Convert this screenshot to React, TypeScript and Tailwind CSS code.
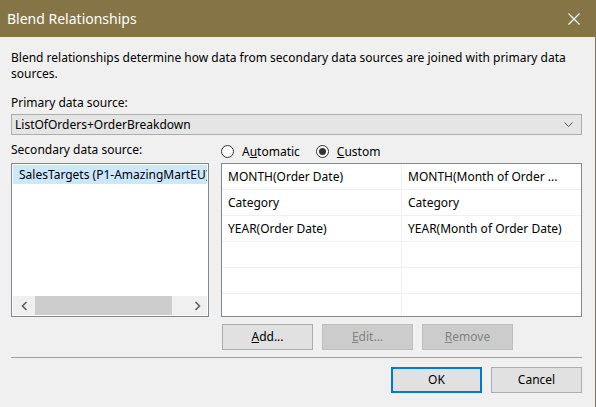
import React from "react";

const font = { fontFamily: '"Noto Sans", "Open Sans", sans-serif' };

function Radio({ checked }: { checked?: boolean }) {
  return (
    <span className="w-[13px] h-[13px] rounded-full border border-[#333333] bg-white flex items-center justify-center shrink-0">
      {checked && <span className="w-[7px] h-[7px] rounded-full bg-[#333333]" />}
    </span>
  );
}

const rows: [string, string][] = [
  ["MONTH(Order Date)", "MONTH(Month of Order ..."],
  ["Category", "Category"],
  ["YEAR(Order Date)", "YEAR(Month of Order Date)"],
  ["", ""],
  ["", ""],
  ["", ""],
];

export default function App() {
  return (
    <div
      className="w-[596px] h-[407px] bg-[#f0f0f0] flex flex-col border-r border-[#857546] text-[12px] leading-[16px] text-black overflow-hidden"
      style={font}
    >
      {/* Title bar */}
      <div className="h-[37px] bg-[#857546] flex items-center justify-between pl-[7px] pr-[15px] shrink-0">
        <span className="text-[14px] leading-[20px] text-white">Blend Relationships</span>
        <svg width="12" height="12" viewBox="0 0 12 12">
          <path d="M0.5 0.5 L11.5 11.5 M11.5 0.5 L0.5 11.5" stroke="white" strokeWidth="1.1" fill="none" />
        </svg>
      </div>

      <div className="flex flex-col pl-[11px] pr-[13px]">
        <p className="mt-[13px] w-[571px]">
          Blend relationships determine how data from secondary data sources are joined with primary data sources.
        </p>

        <div className="mt-[13px] h-[16px]">Primary data source:</div>
        <div className="mt-[3px] h-[21px] border border-[#adadad] bg-[#e5e5e5] flex items-center justify-between pl-[3px] pr-[8px]">
          <span>ListOfOrders+OrderBreakdown</span>
          <svg width="9" height="5" viewBox="0 0 9 5">
            <path d="M0.5 0.5 L4.5 4.5 L8.5 0.5" stroke="#555" strokeWidth="1" fill="none" />
          </svg>
        </div>

        <div className="flex gap-[12px]">
          {/* Left column */}
          <div className="w-[198px] flex flex-col">
            <div className="mt-[7px] h-[16px] whitespace-nowrap">Secondary data source:</div>
            <div className="mt-[5px] h-[154px] border border-[#828790] bg-white flex flex-col justify-between p-[1px]">
              <div className="h-[19px] bg-[#cce8ff] pl-[6px] flex items-center whitespace-nowrap overflow-hidden">
                SalesTargets (P1-AmazingMartEU)
              </div>
              <div className="h-[19px] bg-[#f0f0f0] flex items-center">
                <div className="w-[22px] flex justify-center">
                  <svg width="7" height="10" viewBox="0 0 7 10">
                    <path d="M5.5 1 L1.5 5 L5.5 9" stroke="#606060" strokeWidth="1.6" fill="none" />
                  </svg>
                </div>
                <div className="w-[137px] h-[19px] bg-[#cdcdcd]" />
                <div className="flex-1" />
                <div className="w-[20px] flex justify-center">
                  <svg width="7" height="10" viewBox="0 0 7 10">
                    <path d="M1.5 1 L5.5 5 L1.5 9" stroke="#606060" strokeWidth="1.6" fill="none" />
                  </svg>
                </div>
              </div>
            </div>
          </div>

          {/* Right column */}
          <div className="w-[361px] flex flex-col">
            <div className="pt-[5px] h-[28px] flex items-center">
              <Radio />
              <span className="ml-[8px]">
                A<u>u</u>tomatic
              </span>
              <span className="ml-[16px]">
                <Radio checked />
              </span>
              <span className="ml-[8px]">
                <u>C</u>ustom
              </span>
            </div>
            <div className="h-[154px] border border-[#828790] bg-white overflow-hidden">
              {rows.map((r, i) => (
                <div key={i} className="h-[26px] border-b border-[#f0f0f0] flex">
                  <div className="w-[180px] border-r border-[#f0f0f0] pl-[6px] flex items-center whitespace-nowrap overflow-hidden">
                    {r[0]}
                  </div>
                  <div className="flex-1 pl-[6px] flex items-center whitespace-nowrap overflow-hidden">{r[1]}</div>
                </div>
              ))}
            </div>
            <div className="mt-[7px] flex gap-[9px] pl-[1px]">
              <div className="w-[91px] h-[26px] border border-[#adadad] bg-[#e1e1e1] flex items-center justify-center">
                <span>
                  <u>A</u>dd...
                </span>
              </div>
              <div className="w-[91px] h-[26px] border border-[#bfbfbf] bg-[#cccccc] text-[#838383] flex items-center justify-center">
                <span>
                  <u>E</u>dit...
                </span>
              </div>
              <div className="w-[91px] h-[26px] border border-[#bfbfbf] bg-[#cccccc] text-[#838383] flex items-center justify-center">
                <span>
                  <u>R</u>emove
                </span>
              </div>
            </div>
          </div>
        </div>

        <div className="mt-[7px] h-[1px] bg-[#a0a0a0] w-[571px]" />

        <div className="mt-[9px] flex justify-end gap-[9px] w-[571px]">
          <div className="w-[91px] h-[26px] border-2 border-[#0078d7] bg-[#e1e1e1] flex items-center justify-center">
            OK
          </div>
          <div className="w-[91px] h-[26px] border border-[#adadad] bg-[#e1e1e1] flex items-center justify-center">
            Cancel
          </div>
        </div>
      </div>
    </div>
  );
}
